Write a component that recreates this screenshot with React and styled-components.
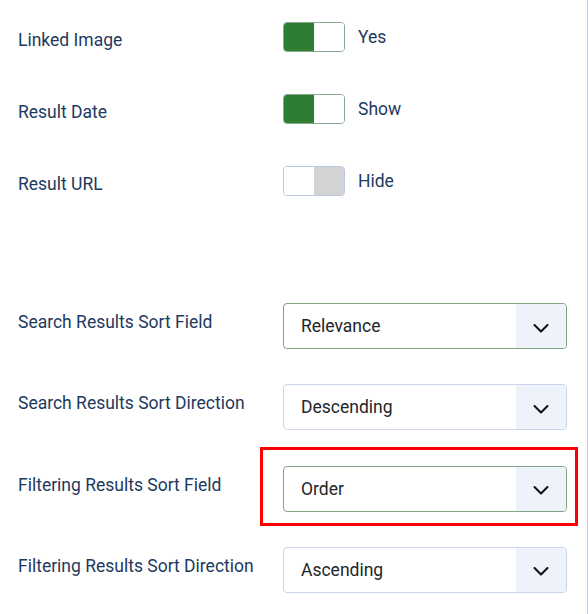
import React from "react";
import styled, { createGlobalStyle } from "styled-components";

const GlobalStyle = createGlobalStyle`
  html, body {
    margin: 0;
    padding: 0;
    background: #fff;
  }
  body {
    font-family: Roboto, "Noto Sans", "Liberation Sans", sans-serif;
    -webkit-font-smoothing: antialiased;
  }
`;

const toggles = [
  { label: "Linked Image", on: true, text: "Yes" },
  { label: "Result Date", on: true, text: "Show" },
  { label: "Result URL", on: false, text: "Hide" },
];

const selects = [
  { label: "Search Results Sort Field", value: "Relevance", valid: true },
  { label: "Search Results Sort Direction", value: "Descending" },
  { label: "Filtering Results Sort Field", value: "Order", valid: true, marked: true },
  { label: "Filtering Results Sort Direction", value: "Ascending" },
];

const Chevron = () => (
  <svg width="18" height="18" viewBox="0 0 18 18" fill="none">
    <path
      d="M2.5 6L9 12.5L15.5 6"
      stroke="#111"
      strokeWidth="2.1"
      strokeLinecap="round"
      strokeLinejoin="round"
    />
  </svg>
);

const App = () => {
  return (
    <>
      <GlobalStyle />
      <Panel>
        {toggles.map((t) => (
          <ToggleRow key={t.label}>
            <Label>{t.label}</Label>
            <Control>
              <Switch $on={t.on}>
                <Half $fill={t.on ? "#2e7d32" : "#fff"} />
                <Half $fill={t.on ? "#fff" : "#d3d3d3"} />
              </Switch>
              <SwitchText>{t.text}</SwitchText>
            </Control>
          </ToggleRow>
        ))}
        <SelectGroup>
          {selects.map((s) => (
            <SelectRow key={s.label}>
              <Label $select>{s.label}</Label>
              <SelectWrap>
                {s.marked && <Highlight />}
                <Select $valid={s.valid}>
                  <SelectValue>{s.value}</SelectValue>
                  <Caret>
                    <Chevron />
                  </Caret>
                </Select>
              </SelectWrap>
            </SelectRow>
          ))}
        </SelectGroup>
      </Panel>
    </>
  );
};

const Panel = styled.main`
  box-sizing: border-box;
  width: 588px;
  min-height: 100vh;
  padding: 22px 0 0 18px;
  border-right: 1px solid #c2cee2;
`;

const ToggleRow = styled.div`
  display: grid;
  grid-template-columns: 265px 1fr;
  height: 30px;
  margin-bottom: 42px;
`;

const Label = styled.div`
  padding-top: ${(p) => (p.$select ? "9px" : "8px")};
  font-size: 17.5px;
  line-height: 20px;
  color: #1d3a5e;
`;

const Control = styled.div`
  display: flex;
  align-items: center;
`;

const Switch = styled.div`
  box-sizing: border-box;
  display: flex;
  width: 62px;
  height: 30px;
  border: 1px solid ${(p) => (p.$on ? "#87a88d" : "#b9c7e2")};
  border-radius: 4px;
  overflow: hidden;
`;

const Half = styled.span`
  flex: 1;
  background: ${(p) => p.$fill};
`;

const SwitchText = styled.span`
  margin-left: 13px;
  font-size: 17.5px;
  line-height: 20px;
  color: #1d3a5e;
`;

const SelectGroup = styled.div`
  padding-top: 65px;
`;

const SelectRow = styled.div`
  display: grid;
  grid-template-columns: 265px 284px;
  height: 46px;
  margin-bottom: 35.3px;
`;

const SelectWrap = styled.div`
  position: relative;
`;

const Highlight = styled.div`
  position: absolute;
  left: -23px;
  top: -19px;
  width: 318px;
  height: 79px;
  box-sizing: border-box;
  border: 3px solid #f00;
  pointer-events: none;
`;

const Select = styled.div`
  box-sizing: border-box;
  display: flex;
  align-items: stretch;
  height: 46px;
  border: 1px solid ${(p) => (p.$valid ? "#7fa585" : "#c9d5ea")};
  border-radius: 4px;
  overflow: hidden;
  background: #fff;
`;

const SelectValue = styled.span`
  flex: 1;
  display: flex;
  align-items: center;
  padding-left: 17px;
  font-size: 17.5px;
  line-height: 20px;
  color: #22262a;
`;

const Caret = styled.span`
  width: 50px;
  display: flex;
  align-items: center;
  justify-content: center;
  padding-top: 3px;
  background: #eef3fb;
`;

export default App;
